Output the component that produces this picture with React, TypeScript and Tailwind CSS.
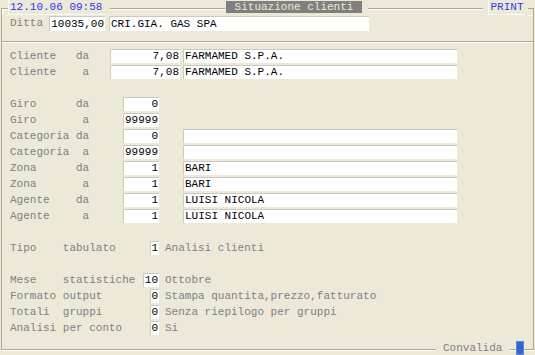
import React from "react";

const LINE = "border-[#aca899]";

function Label({ text, className }: { text: string; className: string }) {
  return (
    <div className={`shrink-0 whitespace-pre text-[#808080] leading-[14px] ${className}`}>{text}</div>
  );
}

function Field({
  value = "",
  right = false,
  className,
}: {
  value?: string;
  right?: boolean;
  className: string;
}) {
  return (
    <div
      className={`shrink-0 bg-white border-t border-l border-[#cdcabd] text-black whitespace-pre overflow-hidden leading-[13px] ${
        right ? "text-right pr-[1px]" : "pl-[1px]"
      } ${className}`}
    >
      {value}
    </div>
  );
}

function RangeRow({ label, code, name, hasName }: { label: string; code: string; name?: string; hasName: boolean }) {
  return (
    <div className="flex h-[14px]">
      <Label text={label} className="w-[113px]" />
      <Field value={code} right className="w-[36px] h-[14px]" />
      {hasName && <Field value={name} className="ml-[24px] w-[274px] h-[14px]" />}
    </div>
  );
}

function OptRow({
  label,
  code,
  desc,
  labelW,
  fieldW,
}: {
  label: string;
  code: string;
  desc: string;
  labelW: string;
  fieldW: string;
}) {
  return (
    <div className="flex h-[14px]">
      <Label text={label} className={labelW} />
      <Field value={code} right className={`${fieldW} h-[14px]`} />
      <div className="ml-[6px] whitespace-pre text-[#808080] leading-[14px]">{desc}</div>
    </div>
  );
}

export default function App() {
  return (
    <div className="w-[535px] h-[355px] bg-[#ece9d8] overflow-hidden font-mono font-[family-name:Liberation_Mono,monospace] text-[11px] flex flex-col">
      {/* header */}
      <div className="flex h-[15px] shrink-0 items-start pl-[1px]">
        <div className={`mt-[8px] h-[7px] w-[7px] border-t border-l ${LINE} shadow-[inset_1px_1px_0_#fff]`} />
        <div className="w-[97px] h-[15px] border-l border-b border-[#fbfaf4] pl-[1px] text-[#3535f5] leading-[14px] whitespace-pre">
          12.10.06 09:58
        </div>
        <div className={`ml-[5px] mt-[8px] w-[115px] border-t ${LINE} shadow-[0_1px_0_#fff]`} />
        <div className="ml-[1px] mt-[1px] w-[136px] h-[12px] bg-[#808080] text-[#ece9d8] leading-[12px] text-center whitespace-pre">
          Situazione clienti
        </div>
        <div className={`ml-[6px] mt-[8px] w-[115px] border-t ${LINE} shadow-[0_1px_0_#fff]`} />
        <div className="ml-[5px] w-[37px] h-[15px] border-l border-b border-[#fbfaf4] text-[#3535f5] leading-[14px] text-center">
          PRINT
        </div>
        <div className={`ml-[3px] mt-[8px] h-[7px] w-[6px] border-t border-r ${LINE} shadow-[0_1px_0_#fff]`} />
      </div>

      {/* body */}
      <div className={`ml-[1px] w-[533px] h-[335px] shrink-0 border-l border-r border-b ${LINE} shadow-[0_1px_0_#fff] flex flex-col pl-[8px]`}>
        <div className="mt-[1px] flex h-[15px]">
          <Label text="Ditta" className="w-[39px] leading-[15px]" />
          <Field value="10035,00" right className="w-[56px] h-[15px] leading-[14px]" />
          <Field value="CRI.GIA. GAS SPA" className="ml-[4px] w-[260px] h-[15px] leading-[14px]" />
        </div>

        <div className={`mt-[10px] -ml-[8px] border-t ${LINE} shadow-[0_1px_0_#fff]`} />

        <div className="mt-[7px] flex flex-col gap-[2px]">
          {[
            ["Cliente   da", "7,08"],
            ["Cliente    a", "7,08"],
          ].map(([l, c]) => (
            <div key={l} className="flex h-[14px]">
              <Label text={l} className="w-[100px]" />
              <Field value={c} right className="w-[70px] h-[14px]" />
              <Field value="FARMAMED S.P.A." className="ml-[3px] w-[274px] h-[14px]" />
            </div>
          ))}
        </div>

        <div className="mt-[18px] flex flex-col gap-[2px]">
          <RangeRow label="Giro      da" code="0" hasName={false} />
          <RangeRow label="Giro       a" code="99999" hasName={false} />
          <RangeRow label="Categoria da" code="0" name="" hasName />
          <RangeRow label="Categoria  a" code="99999" name="" hasName />
          <RangeRow label="Zona      da" code="1" name="BARI" hasName />
          <RangeRow label="Zona       a" code="1" name="BARI" hasName />
          <RangeRow label="Agente    da" code="1" name="LUISI NICOLA" hasName />
          <RangeRow label="Agente     a" code="1" name="LUISI NICOLA" hasName />
        </div>

        <div className="mt-[18px]">
          <OptRow label="Tipo    tabulato" code="1" desc="Analisi clienti" labelW="w-[140px]" fieldW="w-[9px]" />
        </div>

        <div className="mt-[18px] flex flex-col gap-[2px]">
          <OptRow label="Mese    statistiche" code="10" desc="Ottobre" labelW="w-[133px]" fieldW="w-[16px]" />
          <OptRow
            label="Formato output"
            code="0"
            desc="Stampa quantita,prezzo,fatturato"
            labelW="w-[140px]"
            fieldW="w-[9px]"
          />
          <OptRow label="Totali  gruppi" code="0" desc="Senza riepilogo per gruppi" labelW="w-[140px]" fieldW="w-[9px]" />
          <OptRow label="Analisi per conto" code="0" desc="Si" labelW="w-[140px]" fieldW="w-[9px]" />
        </div>
      </div>

      {/* footer */}
      <div className="-mt-[9px] flex h-[14px] shrink-0 pl-[436px] relative">
        <div className="w-[74px] h-[14px] bg-[#ece9d8] pl-[7px] text-[#808080] leading-[14px]">Convalida</div>
        <div className="ml-[6px] w-[8px] h-[14px] bg-[#3463c9] border border-[#5b86dc]" />
      </div>
    </div>
  );
}
